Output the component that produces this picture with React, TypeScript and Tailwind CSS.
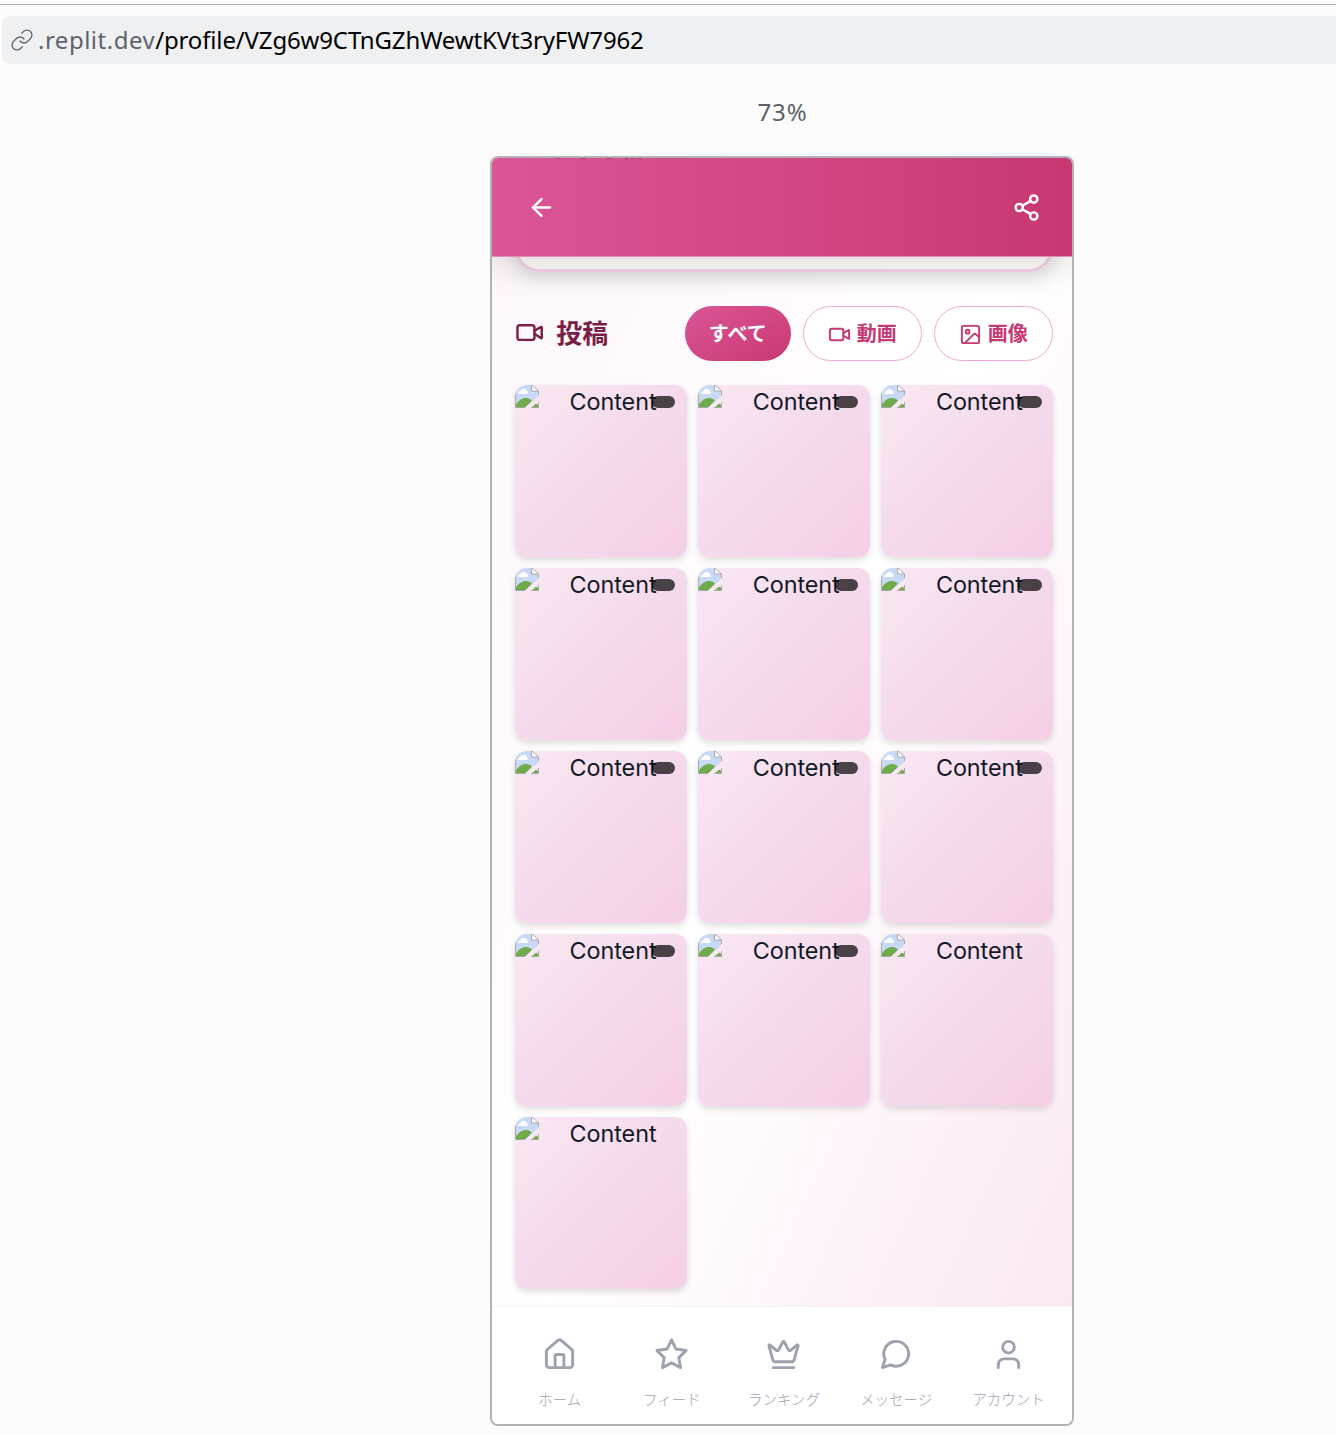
import type { ReactNode } from "react";

function Icon({ className, children, sw = 2 }: { className: string; children: ReactNode; sw?: number }) {
  return (
    <svg viewBox="0 0 24 24" fill="none" stroke="currentColor" strokeWidth={sw} strokeLinecap="round" strokeLinejoin="round" className={className}>
      {children}
    </svg>
  );
}

const video = (
  <>
    <path d="m16 13 5.223 3.482a.5.5 0 0 0 .777-.416V7.870a.5.5 0 0 0-.752-.432L16 10.500" />
    <rect width="14" height="12" x="2" y="6" rx="2" />
  </>
);

function BrokenImage() {
  return (
    <svg viewBox="0 0 24 24" className="-mt-[0.5px] block size-6 shrink-0">
      <path d="M.5 23.5V.5H16.500l7 6.500v6.500l-10 10Z" fill="#c8d9f5" />
      <path d="M3 9.500a2.500 2.500 0 0 1 2.500-2.500 3.300 3.300 0 0 1 6.300 0 1.700 1.700 0 0 1 .2 3H3.500Z" fill="#fff" />
      <path d="M1 23.500v-3c2.500-4 6-6.500 10-6.500 2.500 0 4.500 1 6 2.500l-6.500 7Z" fill="#6fac49" />
      <path d="m15.500 23.500 4.500-5 3.500 3v2Z" fill="#6fac49" />
      <path d="M9.500 24 24 11.500V17l-8 7Z" fill="#f9e7f2" />
      <path d="M16.500.5V7h7Z" fill="#fff" />
      <path d="M.5 23.500V.5h16l7 6.500v4M16.500.5V7h7M.5 23.500h9.500M16 23.500h7.500V18" stroke="#a3a3a8" strokeWidth="0.9" fill="none" />
    </svg>
  );
}

function Tile({ badge }: { badge: boolean }) {
  return (
    <div className="relative flex h-[172px] overflow-hidden rounded-[12px] bg-linear-to-br from-[#fae8f3] via-[#f5daec] to-[#f4cfe5]">
      <BrokenImage />
      <span className="ml-[30.500px] text-[23.360px] leading-[33px] tracking-[-0.05px] text-[#111827]">Content</span>
      {badge && <span className="absolute right-[11.500px] top-[11.500px] h-[12px] w-[23.500px] rounded-full bg-black/70" />}
    </div>
  );
}

const nav = [
  {
    label: "ホーム",
    icon: (
      <>
        <path d="M15 21v-8a1 1 0 0 0-1-1h-4a1 1 0 0 0-1 1v8" />
        <path d="M3 10a2 2 0 0 1 .709-1.528l7-6a2 2 0 0 1 2.582 0l7 6A2 2 0 0 1 21 10v9a2 2 0 0 1-2 2H5a2 2 0 0 1-2-2z" />
      </>
    ),
  },
  { label: "フィード", icon: <path d="M12 2l3.090 6.260L22 9.270l-5 4.870 1.180 6.880L12 17.770l-6.180 3.250L7 14.140 2 9.270l6.910-1.010L12 2z" /> },
  {
    label: "ランキング",
    icon: (
      <>
        <path d="M11.562 3.266a.5.5 0 0 1 .876 0L15.390 8.870a1 1 0 0 0 1.516.294L21.183 5.500a.5.5 0 0 1 .798.519l-2.834 10.246a1 1 0 0 1-.956.734H5.810a1 1 0 0 1-.957-.734L2.020 6.020a.5.5 0 0 1 .798-.519l4.276 3.664a1 1 0 0 0 1.516-.294z" />
        <path d="M5 21h14" />
      </>
    ),
  },
  { label: "メッセージ", icon: <path transform="translate(-0.7 0)" d="m3 21 1.900-5.700a8.500 8.500 0 1 1 3.800 3.800z" /> },
  {
    label: "アカウント",
    icon: (
      <>
        <path d="M19 21v-2a4 4 0 0 0-4-4H9a4 4 0 0 0-4 4v2" />
        <circle cx="12" cy="7" r="4" />
      </>
    ),
  },
];

export default function App() {
  return (
    <div className="flex h-[1434px] w-[1336px] flex-col overflow-hidden bg-[#fcfcfc] font-[Inter,'Noto_Sans_CJK_JP',sans-serif]">
      <div className="mt-1 h-px shrink-0 bg-[#b0b0b0]" />
      <div className="ml-[2px] mt-[11px] flex h-12 shrink-0 items-center rounded-l-[8px] bg-[#eff0f2] pl-[8px]">
        <Icon className="size-6 shrink-0 text-[#5f636b]" sw={1.3}>
          <path d="M10 13a5 5 0 0 0 7.540.540l3-3a5 5 0 0 0-7.070-7.070l-1.720 1.710" />
          <path d="M14 11a5 5 0 0 0-7.540-.540l-3 3a5 5 0 0 0 7.070 7.070l1.710-1.710" />
        </Icon>
        <span className="ml-[4px] font-['Noto_Sans',sans-serif] text-[24px] leading-8 tracking-[0.5px] text-[#5f636b]">
          .replit.dev<span className="tracking-[-0.15px] text-black">/profile/VZg6w9CTnGZhWewtKVt3ryFW7962</span>
        </span>
      </div>
      <div className="ml-[491px] mt-[32px] h-8 w-[583px] shrink-0 text-center font-['Noto_Sans',sans-serif] text-[24px] leading-8 tracking-[0.9px] text-[#5c5f66]">73%</div>
      <div className="ml-[490px] mt-[28px] flex h-[1270px] w-[584px] shrink-0 flex-col overflow-hidden rounded-[8px] border-2 border-[#b1b2b4] bg-linear-to-br from-[#fdf6fa] via-white to-[#fae6f2]">
        <header className="relative z-10 flex h-[99px] shrink-0 items-center justify-between border-b border-[#e58bb8] bg-linear-to-r from-[#db5597] to-[#c83872] pl-[35px] pr-[31px] text-white shadow-[0_10px_30px_rgba(0,0,0,0.13)]">
          <div className="absolute left-[64px] top-0 flex h-px w-[90px] gap-[20px] opacity-60">
            <i className="w-[4px] bg-[#8d2f62]" />
            <i className="w-[6px] bg-[#8d2f62]" />
            <i className="w-[6px] bg-[#8d2f62]" />
            <i className="-ml-[8px] w-[4px] bg-[#8d2f62]" />
            <i className="-ml-[17px] w-[4px] bg-[#8d2f62]" />
            <i className="-ml-[17px] w-[4px] bg-[#8d2f62]" />
          </div>
          <Icon className="size-[29px]">
            <path d="m12 19-7-7 7-7" />
            <path d="M19 12H5" />
          </Icon>
          <Icon className="size-[29px]">
            <circle cx="18" cy="5" r="3" />
            <circle cx="6" cy="12" r="3" />
            <circle cx="18" cy="19" r="3" />
            <path d="m8.590 13.510 6.830 3.980M15.410 6.510l-6.820 3.980" />
          </Icon>
        </header>
        <div className="ml-[23px] -mt-[26px] h-[41px] w-[538px] shrink-0 rounded-b-[24px] border-[3px] border-t-0 border-[#f6d3e8] bg-white/80 shadow-[0_8px_16px_rgba(0,0,0,0.1)]" />
        <div className="ml-[23px] mt-[33px] flex h-[56px] w-[538px] shrink-0 items-center">
          <Icon className="size-[29.200px] shrink-0 text-[#7b1e45]">{video}</Icon>
          <h2 className="ml-[12px] mt-[2px] text-[26px] font-bold leading-[36px] text-[#7b1e45]">投稿</h2>
          <div className="ml-auto flex gap-[11.500px] text-[20px] font-bold leading-7 text-[#c83872]">
            <button className="flex h-[55px] w-[106.500px] items-center justify-center rounded-full bg-linear-to-br from-[#db5597] to-[#c83872] pt-[2px] text-white">すべて</button>
            <button className="flex h-[55px] w-[119.500px] items-center justify-center gap-[6px] rounded-full border-[1.500px] border-[#f0a9d6] bg-white pt-[2px]">
              <Icon className="mt-px size-[23px]">{video}</Icon>動画
            </button>
            <button className="flex h-[55px] w-[119.500px] items-center justify-center gap-[6px] rounded-full border-[1.500px] border-[#f0a9d6] bg-white pt-[2px]">
              <Icon className="mt-px size-[23px]">
                <rect width="18" height="18" x="3" y="3" rx="2" />
                <circle cx="9" cy="9" r="2" />
                <path d="m21 15-3.086-3.086a2 2 0 0 0-2.828 0L6 21" />
              </Icon>
              画像
            </button>
          </div>
        </div>
        <div className="ml-[23px] mt-[23.500px] grid w-[538px] grid-cols-3 gap-x-[11.600px] gap-y-[11.100px]">
          {Array.from({ length: 13 }, (_, i) => (
            <div key={i} className="rounded-[12px] shadow-[0_3px_6px_rgba(0,0,0,0.13)]">
              <Tile badge={i < 11} />
            </div>
          ))}
        </div>
        <nav className="mt-auto grid h-[118px] shrink-0 grid-cols-5 border-t-[1.500px] border-[#f3f4f6] bg-white pl-[11.500px] pr-[7.500px] text-[#9ca3af]">
          {nav.map((n) => (
            <div key={n.label} className="flex flex-col items-center pt-[30px]">
              <Icon className="size-[35px]">{n.icon}</Icon>
              <span className="mt-[18px] whitespace-nowrap text-[14.500px] font-light leading-5">{n.label}</span>
            </div>
          ))}
        </nav>
      </div>
    </div>
  );
}
